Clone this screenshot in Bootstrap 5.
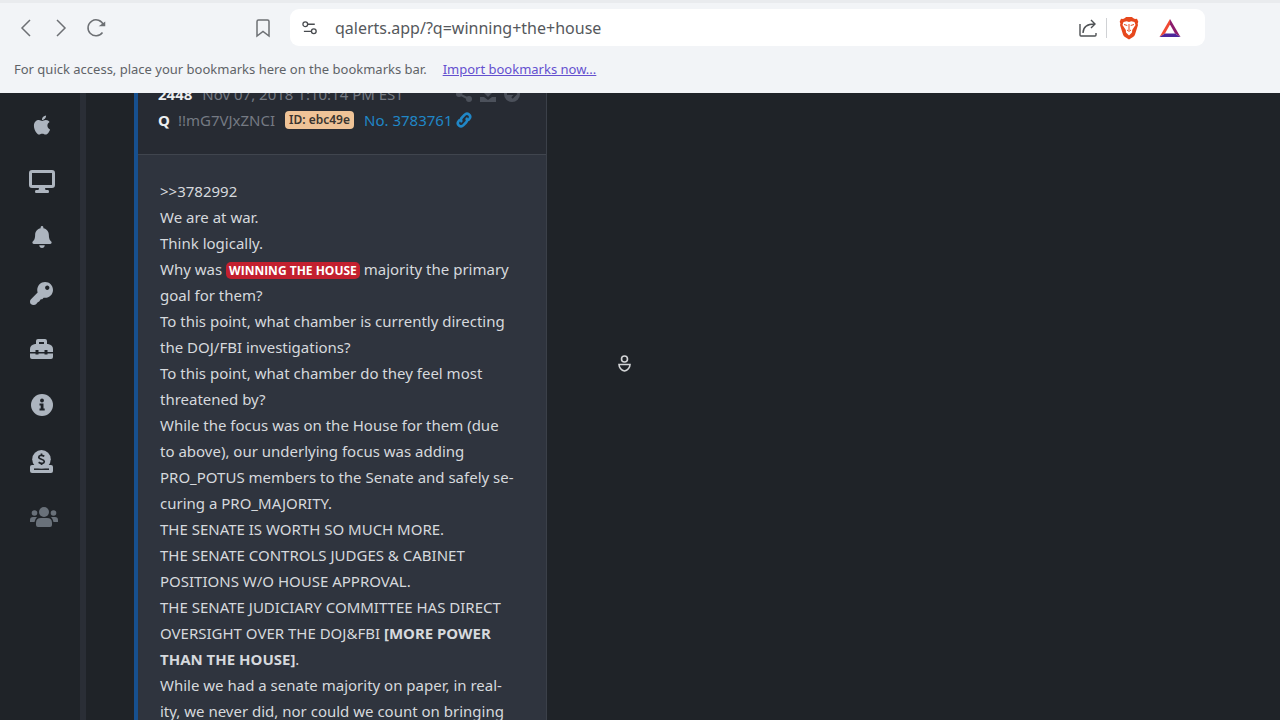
<!DOCTYPE html>
<html lang="en">
<head>
<meta charset="utf-8">
<meta name="viewport" content="width=device-width, initial-scale=1">
<title>QAlerts</title>
<link href="https://cdn.jsdelivr.net/npm/bootstrap@5.3.0/dist/css/bootstrap.min.css" rel="stylesheet">
<script src="https://cdn.jsdelivr.net/npm/bootstrap@5.3.0/dist/js/bootstrap.bundle.min.js" defer></script>
<style>
body{font-family:"Noto Sans","Open Sans",sans-serif;background:#1f2328;color:#d6d9dd}
svg{display:block;flex:none}
.chrome{background:#f2f4f7;border-top:3px solid #e9ebee;color:#5f6367}
.toolbar{height:49px}
.tool{width:35px;height:36px;color:#6d7074}
.bookmark{margin-left:132px}
.address{height:37px;border-radius:9px;margin-left:10px;margin-right:75px;background:#fff}
.address input{font-size:16px;color:#55585c;background:none;outline:0;height:34px}
.split{width:1px;height:20px;background:#d0d2d5}
.marks{font-size:13px;height:41px;padding:0 14px 6px}
.marks a{color:#6450cf}
.side{width:86px;padding-left:3px;border-right:6px solid #2a2e36}
.side a{height:56px;color:#adb5bf}
.side .dim{color:#69717a}
.page-view{padding-left:48px}
.post{width:413px;margin-top:-33px;border:1px solid #3b4049;border-left:4px solid #17508f;background:#2f343e;line-height:26px;font-size:15px}
.post-head{padding:20px 20px 21px;background:#272b33;border-bottom:1px solid #40454e;color:#757a83}
.post-head b{color:#eceef0}
.post-head a{color:#2087c7}
.post-meta{gap:10px}
.actions{color:#4c515b;padding-right:6px}
.post-body{padding:23px 30px 23px 22px}
.tag-id{background:#efc397;color:#3a3530;font-size:12px;line-height:18px;border-radius:4px;padding:0 4px;font-weight:600}
.hit{background:#c3202f;color:#fff;font-family:"Open Sans",sans-serif;font-size:12px;font-weight:700;line-height:18px;border-radius:5px;padding:0 3px}
.pointer{left:617px;top:355px}
</style>
</head>
<body class="vh-100 d-flex flex-column overflow-hidden">
<header class="chrome flex-shrink-0">
  <div class="toolbar d-flex align-items-center">
    <nav class="d-flex ps-2" aria-label="Browser">
      <button class="tool btn p-0 border-0 d-flex align-items-center justify-content-center" aria-label="Back"><svg width="20" height="20" fill="none" stroke="currentColor" stroke-width="1.5"><path d="M14 2 6 10l8 8"/></svg></button>
      <button class="tool btn p-0 border-0 d-flex align-items-center justify-content-center" aria-label="Forward"><svg width="20" height="20" fill="none" stroke="currentColor" stroke-width="1.5"><path d="m6 2 8 8-8 8"/></svg></button>
      <button class="tool btn p-0 border-0 d-flex align-items-center justify-content-center" aria-label="Reload"><svg width="20" height="20" fill="none" stroke="currentColor" stroke-width="1.5"><path d="M16.500 14.500A8 8 0 1 1 17.500 7"/><path d="M15 7.500h3.500V5Z" fill="currentColor"/></svg></button>
    </nav>
    <button class="tool bookmark btn p-0 border-0 d-flex align-items-center justify-content-center" aria-label="Bookmark"><svg width="16" height="20" fill="none" stroke="currentColor" stroke-width="1.500"><path d="M2 3.500Q2 2 3.500 2h9Q14 2 14 3.500V18l-6-4.500L2 18Z"/></svg></button>
    <div class="address ps-2 flex-grow-1 d-flex align-items-center">
      <button class="btn p-0 border-0 ms-1" aria-label="Site settings"><svg width="17" height="18" viewBox="0 0 18 18" fill="none" stroke="#484b4f" stroke-width="1.400"><circle cx="3.500" cy="5" r="2.500"/><path d="M6 5h7.500M2 12.500H9.500"/><circle cx="12.500" cy="12.500" r="2.500"/></svg></button>
      <input class="border-0 flex-grow-1 ms-3 p-0" type="text" value="qalerts.app/?q=winning+the+house" aria-label="Address">
      <button class="btn p-0 border-0 me-2" aria-label="Share"><svg width="20" height="20" viewBox="0 0 20 20" fill="none" stroke="#4e5154" stroke-width="1.400"><path d="M2 6v11q0 1 1 1h14q1 0 1-1v-2M5 15c0-6 4-9 12-9M13 2l4 4-4 4"/></svg></button>
      <span class="split"></span>
      <button class="btn p-0 border-0 ms-2 me-3" aria-label="Brave Shields"><svg width="28" height="24" viewBox="0 0 28 24"><path d="M8 3 10 2 11 1h6l1 1 2 1 2-.3 1.300 3-.7 2L23 9l-3 9.500q-.5 1.500-2 2.500L14 23.500 10 21q-1.500-1-2-2.500L5 9l.4-1.300-.7-2L6 2.700Z" fill="#e6481d"/><path d="m8.500 6 3.200-.8L14 6l2.300-.8 3.200.8 1 3-3.300 5-.2 2.600L14 19.500 11 16.600 10.800 14 7.500 9Z" fill="#fff"/><path d="m9 8.500 3.300 1M19 8.500l-3.300 1M14 8v6m-2 0 2 1.300 2-1.300" fill="none" stroke="#e6481d"/></svg></button>
      <button class="btn p-0 border-0 me-4" aria-label="Brave Rewards"><svg width="22" height="20" viewBox="0 0 22 20"><path d="M11 1 .5 19 6 15.500 11 6.500Z" fill="#f04934"/><path d="M11 1 21.500 19 16 15.500 11 6.500Z" fill="#8c1c6c"/><path d="M.5 19h21L16 15.500H6Z" fill="#4d269a"/></svg></button>
    </div>
  </div>
  <div class="marks d-flex align-items-center"><span>For quick access, place your bookmarks here on the bookmarks bar.</span><a class="ms-3" href="#">Import bookmarks now...</a></div>
</header>
<div class="d-flex flex-grow-1 overflow-hidden">
  <nav class="side flex-shrink-0 pt-1" aria-label="Site">
    <a href="#" class="d-flex align-items-center justify-content-center" aria-label="Apple app"><svg width="18" height="22" viewBox="0 0 384 512" fill="currentColor"><path d="M318.700 268.700c-.2-36.700 16.400-64.400 50-84.800-18.800-26.900-47.200-41.700-84.700-44.600-35.500-2.800-74.300 20.700-88.500 20.700-15 0-49.400-19.700-76.400-19.700C63.300 141.200 4 184.800 4 273.500q0 39.300 14.400 81.200c12.800 36.700 59 126.700 107.200 125.200 25.200-.6 43-17.900 75.800-17.900 31.800 0 48.300 17.900 76.400 17.900 48.600-.7 90.400-82.500 102.600-119.300-65.200-30.700-61.700-90-61.700-91.900zm-56.600-164.200c27.300-32.400 24.800-61.900 24-72.500-24.100 1.400-52 16.400-67.900 34.900-17.500 19.800-27.800 44.300-25.600 71.900 26.100 2 49.900-11.400 69.500-34.300z"/></svg></a>
    <a href="#" class="d-flex align-items-center justify-content-center" aria-label="Desktop"><svg width="26" height="24" viewBox="0 0 26 24" fill="currentColor"><path fill-rule="evenodd" d="M3 1h20q3 0 3 3v12q0 3-3 3h-7l.5 2H19q1 0 1 1.500t-1 1.500H7q-1 0-1-1.500T7 21h2.500l.5-2H3q-3 0-3-3V4q0-3 3-3Zm0 3v12h20V4Z"/></svg></a>
    <a href="#" class="d-flex align-items-center justify-content-center" aria-label="Alerts"><svg width="20" height="22" viewBox="0 0 448 512" fill="currentColor"><path d="M224 512c35.300 0 64-28.700 64-64H160c0 35.300 28.700 64 64 64zm215.400-149.700c-19.300-20.800-55.500-52-55.500-154.300 0-77.700-54.500-139.900-127.900-155.200V32c0-17.700-14.300-32-32-32s-32 14.300-32 32v20.800C118.600 68.100 64.100 130.300 64.100 208c0 102.300-36.200 133.500-55.500 154.300-6 6.500-8.700 14.200-8.600 21.700.1 16.400 13 32 32.100 32h383.800c19.100 0 32-15.600 32.100-32 .1-7.500-2.600-15.300-8.600-21.700z"/></svg></a>
    <a href="#" class="d-flex align-items-center justify-content-center" aria-label="Key"><svg width="23" height="23" viewBox="0 0 512 512" fill="currentColor"><path d="M512 176c0 97.200-78.800 176-176 176-11.200 0-22.200-1.100-32.800-3.100l-24 27c-4.500 5.100-11 8.100-17.900 8.100H240l-36 50-32 14-32 42q-20 22-60 22-80 0-80-70 0-40 22-60l147.800-147.800c-5.700-17.400-8.800-35.900-8.800-55.100C160 78.800 238.800 0 336 0c97.500 0 176 78.500 176 176zM336 128c0 26.500 21.500 48 48 48s48-21.500 48-48-21.500-48-48-48-48 21.500-48 48z"/></svg></a>
    <a href="#" class="d-flex align-items-center justify-content-center" aria-label="Tools"><svg width="23" height="20" viewBox="0 0 23 20" fill="currentColor"><path fill-rule="evenodd" d="M6 5V2q0-2 2-2h7q2 0 2 2v3h1q5 1 5 5v3h-5.500v-2h-3v2h-6v-2h-3v2H0v-3q0-4 5-5Zm3 0h5V3H9Z"/><path d="M0 14.500h5.500v1h3v-1h6v1h3v-1H23V18q0 2-2 2H2q-2 0-2-2Z"/></svg></a>
    <a href="#" class="d-flex align-items-center justify-content-center" aria-label="Information"><svg width="22" height="22" viewBox="0 0 22 22"><circle cx="11" cy="11" r="11" fill="currentColor"/><circle cx="11" cy="6.500" r="1.900" fill="#1f2328"/><path d="M8.500 9.500h4v5h1.200v2H8.500v-2h1.200v-3H8.500Z" fill="#1f2328"/></svg></a>
    <a href="#" class="d-flex align-items-center justify-content-center" aria-label="Donate"><svg width="23" height="23" viewBox="0 0 23 23"><path d="M2 15h19q2 0 2 2v4q0 2-2 2H2q-2 0-2-2v-4q0-2 2-2Z" fill="currentColor"/><path d="M4 19.200h15" stroke="#1f2328" stroke-width="1.500"/><circle cx="11.500" cy="9.300" r="9.300" fill="currentColor"/><path d="M14.300 6.300C11 4.500 8.600 5.500 8.800 7.500c.3 2 5.400 1.600 5.500 4 0 2-3 2.500-5.700.8M11.500 3.500v2m0 7.500v2" fill="none" stroke="#1f2328" stroke-width="1.700"/></svg></a>
    <a href="#" class="dim d-flex align-items-center justify-content-center ps-1" aria-label="Community"><svg width="28" height="20" viewBox="0 0 28 20" fill="currentColor"><circle cx="14" cy="5" r="5"/><circle cx="4.500" cy="6" r="2.800"/><circle cx="23.500" cy="6" r="2.800"/><path d="M6 20v-4q0-5 5-5h6q5 0 5 5v2q0 2-2 2H8Q6 20 6 18ZM0 15v-2q0-3 3-3h4q-2 2-2.500 5ZM28 15v-2q0-3-3-3h-4q2 2 2.500 5Z"/></svg></a>
  </nav>
  <main class="page-view flex-grow-1">
    <article class="post">
      <div class="post-head">
        <div class="post-meta d-flex"><b>2448</b><span>Nov 07, 2018 1:10:14 PM EST</span>
          <span class="actions d-flex align-items-center ms-auto gap-2">
            <svg width="16" height="16" viewBox="0 0 16 16" fill="currentColor"><circle cx="3" cy="8" r="3"/><circle cx="13" cy="3" r="3"/><circle cx="13" cy="13" r="3"/><path d="m13 3-10 5 10 5" fill="none" stroke="currentColor" stroke-width="2"/></svg>
            <svg width="16" height="16" viewBox="0 0 16 16" fill="currentColor"><path d="M6 0h4v5h4l-6 6-6-6h4ZM0 11h4l4 3 4-3h4v5H0Z"/></svg>
            <svg width="16" height="16" viewBox="0 0 16 16"><circle cx="8" cy="8" r="8" fill="currentColor"/><path d="M3 8h8M8 4l4 4-4 4" fill="none" stroke="#272b33" stroke-width="2"/></svg>
          </span></div>
        <div class="post-meta d-flex align-items-center"><span><b class="pe-2">Q</b>!!mG7VJxZNCI</span><span class="tag-id">ID: ebc49e</span><a class="text-decoration-none d-flex align-items-center" href="#">No. 3783761<svg class="ms-1" width="16" height="16" viewBox="0 0 16 16" fill="none" stroke="currentColor" stroke-width="2.600"><path d="M6 10C4 8 5 6.500 6 5.500l2.500-2.700c3-3 7.500 1 4.800 4.200L12 8.500M10 6c2 2 1 3.500 0 4.500l-2.500 2.700c-3 3-7.500-1-4.800-4.200L4 7.500"/></svg></a></div>
      </div>
      <div class="post-body">&gt;&gt;3782992<br>We are at war.<br>Think logically.<br>Why was <span class="hit">WINNING THE HOUSE</span> majority the primary goal for them?<br>To this point, what chamber is currently directing the DOJ/FBI investigations?<br>To this point, what chamber do they feel most threatened by?<br>While the focus was on the House for them (due to above), our underlying focus was adding PRO_POTUS members to the Senate and safely se&shy;curing a PRO_MAJORITY.<br>THE SENATE IS WORTH SO MUCH MORE.<br>THE SENATE CONTROLS JUDGES &amp; CABINET POSITIONS W/O HOUSE APPROVAL.<br>THE SENATE JUDICIARY COMMITTEE HAS DIRECT OVERSIGHT OVER THE DOJ&amp;FBI <strong>[MORE POWER THAN THE HOUSE]</strong>.<br>While we had a senate majority on paper, in real&shy;ity, we never did, nor could we count on bringing</div>
    </article>
  </main>
</div>
<svg class="pointer position-absolute" width="15" height="18" viewBox="0 0 15 18" fill="none" stroke="#d2d4d6" stroke-width="1.600"><circle cx="7.500" cy="4" r="3"/><path d="M2 9.500h11c0 3-2.500 6-5.500 6.500C4.500 15.500 2 12.500 2 9.500Z"/></svg>
</body>
</html>
